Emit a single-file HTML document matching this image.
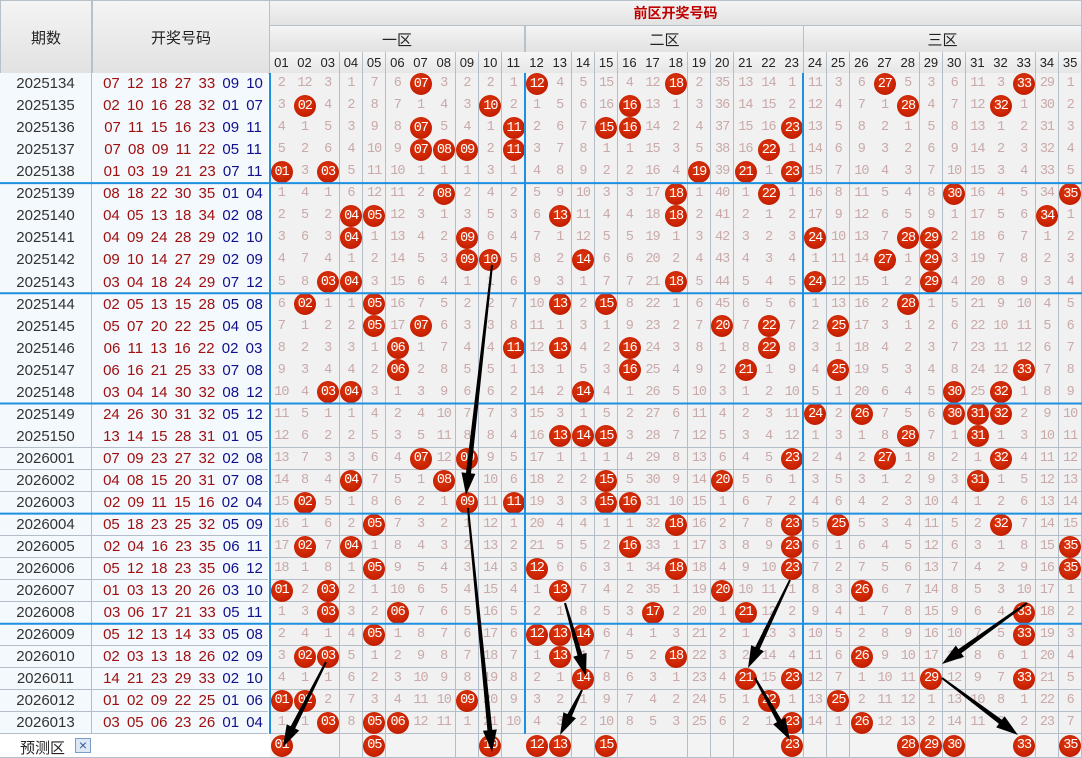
<!DOCTYPE html>
<html><head><meta charset="utf-8">
<style>
*{margin:0;padding:0;box-sizing:border-box}
body{width:1082px;height:758px;overflow:hidden;background:#fff;position:relative;font-family:"Liberation Sans","Noto Sans CJK SC",sans-serif}
.a{position:absolute}
.h{background:linear-gradient(#f4f4f4,#e2e2e2);border:1px solid #b8c0c8;color:#222;display:flex;align-items:center;justify-content:center}
.c{position:absolute;border-right:1px solid #b4bec8;border-bottom:1px solid #b4bec8;background:#f1f1f1;color:#c9a9a9;font-family:"Liberation Mono",monospace;font-size:13.5px;display:flex;align-items:center;justify-content:center;letter-spacing:-1px}
.b{position:absolute;width:22px;height:22px;border-radius:50%;background:radial-gradient(circle at 45% 40%,#e03a10,#c41e00 70%,#b01800);color:#fff;font-family:"Liberation Mono",monospace;font-size:13.5px;display:flex;align-items:center;justify-content:center;letter-spacing:-1px}
.p{position:absolute;left:0;width:92px;background:#f4f9fd;border-right:1px solid #b4bec8;border-bottom:1px solid #b4bec8;font-size:15px;color:#333;display:flex;align-items:center;justify-content:center}
.n{position:absolute;left:92px;width:176px;background:#f4f9fd;border-bottom:1px solid #b4bec8;font-family:"Liberation Sans",sans-serif;font-size:15px;word-spacing:3px;display:flex;align-items:center;justify-content:center;padding-left:6px;white-space:nowrap}
.r{color:#a01010}.u{color:#10108a}
</style></head><body>
<div class="a h" style="left:0;top:0;width:92px;height:74px;font-size:15px">期数</div>
<div class="a h" style="left:92px;top:0;width:178px;height:74px;font-size:15px">开奖号码</div>
<div class="a h" style="left:269px;top:0;width:813px;height:26px;color:#c00000;font-weight:bold;font-size:14px">前区开奖号码</div>
<div class="a h" style="left:269px;top:25px;width:256px;height:28px;font-size:15px">一区</div>
<div class="a h" style="left:525px;top:25px;width:279px;height:28px;font-size:15px">二区</div>
<div class="a h" style="left:803px;top:25px;width:279px;height:28px;font-size:15px">三区</div>
<div id="g"></div>
<script>
const draws=[
["2025134","07 12 18 27 33","09 10"],["2025135","02 10 16 28 32","01 07"],["2025136","07 11 15 16 23","09 11"],["2025137","07 08 09 11 22","05 11"],["2025138","01 03 19 21 23","07 11"],
["2025139","08 18 22 30 35","01 04"],["2025140","04 05 13 18 34","02 08"],["2025141","04 09 24 28 29","02 10"],["2025142","09 10 14 27 29","02 09"],["2025143","03 04 18 24 29","07 12"],
["2025144","02 05 13 15 28","05 08"],["2025145","05 07 20 22 25","04 05"],["2025146","06 11 13 16 22","02 03"],["2025147","06 16 21 25 33","07 08"],["2025148","03 04 14 30 32","08 12"],
["2025149","24 26 30 31 32","05 12"],["2025150","13 14 15 28 31","01 05"],["2026001","07 09 23 27 32","02 08"],["2026002","04 08 15 20 31","07 08"],["2026003","02 09 11 15 16","02 04"],
["2026004","05 18 23 25 32","05 09"],["2026005","02 04 16 23 35","06 11"],["2026006","05 12 18 23 35","06 12"],["2026007","01 03 13 20 26","03 10"],["2026008","03 06 17 21 33","05 11"],
["2026009","05 12 13 14 33","05 08"],["2026010","02 03 13 18 26","02 09"],["2026011","14 21 23 29 33","02 10"],["2026012","01 02 09 22 25","01 06"],["2026013","03 05 06 23 26","01 04"]];
const init=[2,12,3,1,7,6,0,3,2,2,1,0,4,5,15,4,12,0,2,35,13,14,1,11,3,6,0,5,3,6,11,3,0,29,1];
const W=812/35,X=i=>270+i*W,RH=22.03,T0=73;
let h='';
for(let i=0;i<35;i++){h+=`<div class="c" style="left:${X(i)}px;top:52px;width:${W+0.5}px;height:22px;background:linear-gradient(#f6f6f6,#e6e6e6);color:#222;font-family:'Liberation Sans',sans-serif;font-size:13px;letter-spacing:0">${String(i+1).padStart(2,'0')}</div>`}
let om=init.slice();
draws.forEach((d,r)=>{
 const y=T0+r*RH;const nums=d[1].split(' ').map(Number);
 if(r>0){for(let i=0;i<35;i++)om[i]=nums.includes(i+1)?0:om[i]+1}
 h+=`<div class="p" style="top:${y}px;height:${RH+0.5}px">${d[0]}</div>`;
 h+=`<div class="n" style="top:${y}px;height:${RH+0.5}px"><span class="r">${d[1]}</span>&nbsp;<span class="u">${d[2]}</span></div>`;
 for(let i=0;i<35;i++){
  h+=`<div class="c" style="left:${X(i)}px;top:${y}px;width:${W+0.5}px;height:${RH+0.5}px">${om[i]===0?'':om[i]}</div>`;
 }
 nums.forEach(n=>{h+=`<div class="b" style="left:${X(n-1)+W/2-11}px;top:${y+RH/2-11}px">${String(n).padStart(2,'0')}</div>`});
});
const py=T0+30*RH;
h+=`<div class="a" style="left:0;top:${py}px;width:270px;height:${758-py}px;background:#fff;border-bottom:1px solid #b4bec8"></div>`;
h+=`<div class="a" style="left:20px;top:${py+3}px;font-size:15px;color:#222">预测区</div>`;
h+=`<div class="a" style="left:75px;top:${py+4}px;width:16px;height:15px;border:1px solid #7a9cc8;background:#dde8f6;color:#3a5a9a;font-size:14px;line-height:13px;text-align:center">×</div>`;
for(let i=0;i<35;i++)h+=`<div class="c" style="left:${X(i)}px;top:${py}px;width:${W+0.5}px;height:${758-py}px;background:#f3f3f3"></div>`;
[1,5,10,12,13,15,23,28,29,30,33,35].forEach(n=>{h+=`<div class="b" style="left:${X(n-1)+W/2-11}px;top:${py+1}px">${String(n).padStart(2,'0')}</div>`});
let s=`<svg class="a" style="left:0;top:0" width="1082" height="758">`;
[270,525,803].forEach(x=>s+=`<line x1="${x}" y1="73" x2="${x}" y2="${py}" stroke="#1e90e0" stroke-width="2"/>`);
for(let k=1;k<6;k++){const y=T0+k*5*RH;s+=`<line x1="0" y1="${y}" x2="1082" y2="${y}" stroke="#1e90e0" stroke-width="2"/>`}
function arrow(x1,y1,x2,y2){const dx=x2-x1,dy=y2-y1,L=Math.hypot(dx,dy),ux=dx/L,uy=dy/L,nx=-uy,ny=ux;
 const hl=22,hw=7,bx=x2-ux*hl,by=y2-uy*hl;
 const p=[[x1+nx*1,y1+ny*1],[bx+nx*2.5,by+ny*2.5],[bx+nx*hw,by+ny*hw],[x2,y2],[bx-nx*hw,by-ny*hw],[bx-nx*2.5,by-ny*2.5],[x1-nx*1,y1-ny*1]];
 s+=`<polygon points="${p.map(q=>q.map(v=>v.toFixed(1)).join(',')).join(' ')}" fill="#000"/>`}
arrow(492,265,466,495);arrow(468,508,492,752);arrow(326,662,283,747);
arrow(565,603,586,676);arrow(582,690,560,735);
arrow(790,580,748,668);arrow(755,678,790,740);
arrow(1027,603,942,664);arrow(942,678,1018,735);
s+=`</svg>`;
document.getElementById('g').innerHTML=h+s;
</script>
</body></html>
